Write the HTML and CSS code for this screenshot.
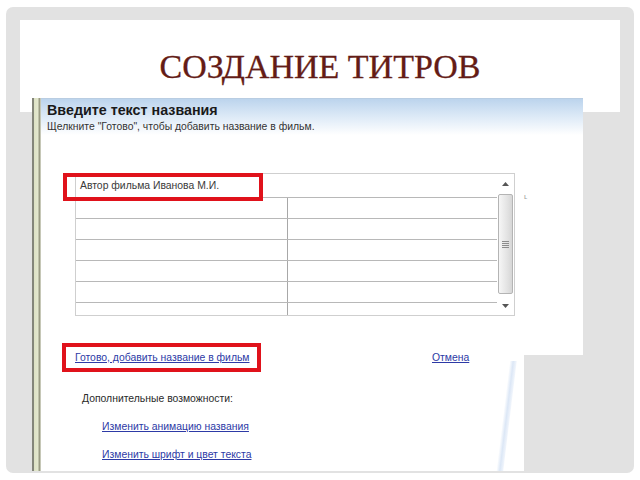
FILE: index.html
```html
<!DOCTYPE html>
<html lang="ru">
<head>
<meta charset="utf-8">
<title>Создание титров</title>
<link rel="stylesheet" href="styles.css">
</head>
<body>
<div class="slide">
  <div class="title-box">
    <h1 class="title">СОЗДАНИЕ ТИТРОВ</h1>
  </div>
  <div class="shot">
    <div class="strip"></div>
    <div class="main">
      <div class="header">
        <div class="h-title">Введите текст названия</div>
        <div class="h-sub">Щелкните "Готово", чтобы добавить название в фильм.</div>
      </div>
      <div class="grid-row">
        <div class="grid-wrap">
          <div class="grid">
            <div class="rows">
              <div class="row first">Автор фильма Иванова М.И.</div>
              <div class="row"><span class="cell"></span><span class="cell2"></span></div>
              <div class="row"><span class="cell"></span><span class="cell2"></span></div>
              <div class="row"><span class="cell"></span><span class="cell2"></span></div>
              <div class="row"><span class="cell"></span><span class="cell2"></span></div>
              <div class="row"><span class="cell"></span><span class="cell2"></span></div>
              <div class="row last"><span class="cell"></span><span class="cell2"></span></div>
            </div>
            <div class="scroll">
              <div class="arrow"><svg width="7" height="4" viewBox="0 0 7 4"><path d="M0 4 L3.5 0 L7 4 Z" fill="#555"/></svg></div>
              <div class="thumb"><span class="grip"></span></div>
              <div class="spacer"></div>
              <div class="arrow"><svg width="7" height="4" viewBox="0 0 7 4"><path d="M0 0 L3.5 4 L7 0 Z" fill="#555"/></svg></div>
            </div>
          </div>
          <div class="red red-one"></div>
        </div>
        <span class="mark">ʟ</span>
      </div>
      <div class="actions">
        <div class="red-link"><a href="#" class="link">Готово, добавить название в фильм</a></div>
        <a href="#" class="link cancel">Отмена</a>
      </div>
      <div class="more">Дополнительные возможности:</div>
      <a href="#" class="link sub-link">Изменить анимацию названия</a>
      <a href="#" class="link sub-link">Изменить шрифт и цвет текста</a>
    </div>
    <div class="curl"></div>
  </div>
</div>
</body>
</html>
```

FILE: styles.css
```css
html, body {
  margin: 0;
  padding: 0;
  background: #ffffff;
}

.slide {
  margin: 7px 6px 0;
  height: 466px;
  box-sizing: border-box;
  padding: 13px 14px 0;
  background: #e2e2e2;
  border-radius: 7px;
}

.title-box {
  height: 92px;
  background: #ffffff;
  box-sizing: border-box;
  padding-top: 27px;
}

.title {
  margin: 0;
  text-align: center;
  font-family: "Liberation Serif", "DejaVu Serif", serif;
  font-weight: normal;
  font-size: 34px;
  line-height: 40px;
  color: #641c16;
  -webkit-text-stroke: 0.3px #641c16;
}

.shot {
  position: relative;
  display: flex;
  width: 551px;
  height: 373px;
  margin: -14px 0 0 12px;
  background: #ffffff;
  clip-path: polygon(0 0, 100% 0, 100% 257px, 492px 257px, 492px 100%, 0 100%);
}

.strip {
  width: 9px;
  flex: none;
  box-sizing: border-box;
  border-left: 2px solid #84867a;
  background: linear-gradient(to right, #dde2c4 0, #e4e8cf 4px, #9a9c84 5px, #9a9c84 6px, #f2f3ea 7px);
}

.main {
  flex: 1;
  display: flex;
  flex-direction: column;
  font-family: "Liberation Sans", Arial, sans-serif;
  color: #333333;
  font-size: 10.4px;
  white-space: nowrap;
}

.header {
  height: 37px;
  box-sizing: border-box;
  padding: 3px 0 0 6px;
  border-top: 1px solid #b9cde2;
  background: linear-gradient(to bottom, #bcd4ed 0, #d7e6f5 40%, #ffffff 100%);
}

.h-title {
  font-weight: bold;
  font-size: 14.3px;
  line-height: 16px;
  color: #1a1a1a;
}

.h-sub {
  margin-top: 2px;
  line-height: 13px;
  color: #333333;
}

.grid-row {
  display: flex;
  align-items: flex-start;
  margin: 38px 0 0 34px;
}

.grid-wrap {
  position: relative;
}

.grid {
  display: flex;
  width: 440px;
  height: 143px;
  box-sizing: border-box;
  border: 1px solid #cfcfcf;
  background: #ffffff;
}

.rows {
  flex: 1;
  display: flex;
  flex-direction: column;
}

.row {
  display: flex;
  height: 21px;
  box-sizing: border-box;
  border-bottom: 1px solid #b8b8b8;
}

.row.first {
  height: 24px;
  padding-left: 4px;
  line-height: 23px;
  color: #3a3a3a;
}

.row.last {
  flex: 1;
  border-bottom: none;
}

.cell {
  width: 211px;
  flex: none;
  border-right: 1px solid #a8a8a8;
}

.cell2 {
  flex: 1;
}

.scroll {
  width: 17px;
  flex: none;
  display: flex;
  flex-direction: column;
  align-items: center;
  background: #ffffff;
}

.arrow {
  height: 19px;
  width: 17px;
  display: flex;
  align-items: center;
  justify-content: center;
}

.thumb {
  width: 15px;
  height: 100px;
  margin-top: 1px;
  box-sizing: border-box;
  border: 1px solid #b4b4b4;
  border-radius: 2px;
  background: linear-gradient(to right, #f6f6f6, #e4e4e4 60%, #d6d6d6);
  display: flex;
  align-items: center;
  justify-content: center;
}

.grip {
  width: 7px;
  height: 7px;
  background: repeating-linear-gradient(to bottom, #8c8c8c 0, #8c8c8c 1px, transparent 1px, transparent 2px);
}

.spacer {
  flex: 1;
}

.red {
  position: absolute;
  box-sizing: border-box;
  border: 4px solid #e0121b;
}

.red-one {
  left: -12px;
  top: 0;
  width: 200px;
  height: 28px;
}

.mark {
  margin: 20px 0 0 9px;
  font-size: 8px;
  line-height: 8px;
  color: #9a9a9a;
}

.actions {
  display: flex;
  align-items: center;
  margin: 27px 0 0 21px;
}

.red-link {
  width: 199px;
  height: 29px;
  box-sizing: border-box;
  border: 4px solid #e0121b;
  padding-left: 9px;
  display: flex;
  align-items: center;
}

.link {
  color: #2d3aa6;
  text-decoration: underline;
  font-size: 10.4px;
  line-height: 14px;
}

.cancel {
  margin-left: 171px;
}

.more {
  margin: 20px 0 0 41px;
  line-height: 14px;
  color: #2a2a2a;
}

.sub-link {
  align-self: flex-start;
  margin: 14px 0 0 61px;
}

.curl {
  position: absolute;
  left: 471px;
  top: 263px;
  width: 7px;
  height: 110px;
  background: linear-gradient(to right, #ffffff, #dce7f6 50%, #f2f6fc);
  transform: skewX(-7deg);
}
```
